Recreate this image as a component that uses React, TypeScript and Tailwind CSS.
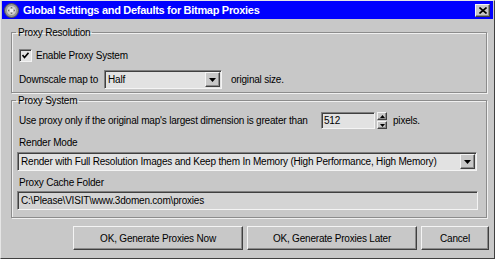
import React from "react";

const font = { fontFamily: '"Liberation Sans", Arial, sans-serif' };
const txt = "text-[10px] tracking-[-0.2px] leading-[13px]";

const Raised = ({ className = "", children }: { className?: string; children?: React.ReactNode }) => (
  <div
    className={`flex items-center justify-center border border-t-[#f4f4f4] border-l-[#f4f4f4] border-r-[#404040] border-b-[#404040] bg-[#c8c8c8] shadow-[inset_-1px_-1px_0_#8a8a8a] ${className}`}
  >
    {children}
  </div>
);

const DownArrow = () => (
  <svg width="7" height="4" viewBox="0 0 7 4">
    <path d="M0 0h7L3.5 4z" fill="#000" />
  </svg>
);

const Dropdown = ({ value, className = "" }: { value: string; className?: string }) => (
  <div
    className={`flex h-[19px] items-center border border-t-[#808080] border-l-[#808080] border-r-[#f4f4f4] border-b-[#f4f4f4] bg-[#e2e2e2] shadow-[inset_1px_1px_0_#404040] ${className}`}
  >
    <span className={`flex-1 truncate pl-[3px] ${txt}`}>{value}</span>
    <Raised className="mr-[1px] h-[15px] w-[15px]">
      <DownArrow />
    </Raised>
  </div>
);

const Group = ({ title, className = "", children }: { title: string; className?: string; children: React.ReactNode }) => (
  <fieldset
    className={`ml-[10px] w-[476px] border border-[#8c8c8c] shadow-[1px_1px_0_#f0f0f0,inset_1px_1px_0_#f0f0f0] ${className}`}
  >
    <legend className={`ml-[4px] px-[2px] ${txt}`}>{title}</legend>
    {children}
  </fieldset>
);

const Button = ({ label, className = "" }: { label: string; className?: string }) => (
  <Raised className={`h-[24px] ${txt} ${className}`}>{label}</Raised>
);

export default function App() {
  return (
    <div
      style={font}
      className="flex h-[259px] w-[495px] flex-col border border-t-[#e6e6e6] border-l-[#e6e6e6] border-r-[#404040] border-b-[#404040] bg-[#c8c8c8] text-black"
    >
      {/* title bar */}
      <div className="mx-[1px] flex h-[18px] items-center bg-[#0000ff] pl-[2px] pr-[3px]">
        <svg width="15" height="15" viewBox="0 0 15 15">
          <circle cx="7.5" cy="7.5" r="7" fill="#9a9a9a" stroke="#505050" />
          <circle cx="7.5" cy="7.5" r="4.5" fill="#d0d0d0" />
          <path d="M4 7.5h7M7.5 4v7" stroke="#707070" strokeWidth="1.5" />
          <circle cx="7.5" cy="7.5" r="2" fill="#f0f0f0" />
        </svg>
        <span className="ml-[4px] flex-1 text-[11px] font-bold tracking-[-0.3px] text-white">
          Global Settings and Defaults for Bitmap Proxies
        </span>
        <Raised className="h-[13px] w-[15px]">
          <svg width="8" height="7" viewBox="0 0 8 7">
            <path d="M0.5 0.5l7 6M7.5 0.5l-7 6" stroke="#000" strokeWidth="1.6" />
          </svg>
        </Raised>
      </div>

      <Group title="Proxy Resolution" className="mt-[7px] h-[67px]">
        <div className="ml-[7px] mt-[10px] flex h-[13px] items-center">
          <div className="flex h-[13px] w-[13px] items-center justify-center border border-t-[#808080] border-l-[#808080] border-r-[#f4f4f4] border-b-[#f4f4f4] bg-[#e2e2e2] shadow-[inset_1px_1px_0_#404040]">
            <svg width="7" height="7" viewBox="0 0 7 7">
              <path d="M0.5 3l2 2.5L6.5 0.8" stroke="#000" strokeWidth="1.6" fill="none" />
            </svg>
          </div>
          <span className={`ml-[4px] ${txt}`}>Enable Proxy System</span>
        </div>
        <div className="ml-[7px] mt-[8px] flex items-center">
          <span className={`w-[85px] ${txt}`}>Downscale map to</span>
          <Dropdown value="Half" className="w-[118px]" />
          <span className={`ml-[9px] ${txt}`}>original size.</span>
        </div>
      </Group>

      <Group title="Proxy System" className="mt-[1px] h-[124px]">
        <div className="ml-[7px] mt-[5px] flex items-center">
          <span className={`w-[302px] ${txt}`}>Use proxy only if the original map&apos;s largest dimension is greater than</span>
          <div className={`flex h-[17px] w-[54px] items-center border border-t-[#808080] border-l-[#808080] border-r-[#f4f4f4] border-b-[#f4f4f4] bg-[#e2e2e2] pl-[2px] shadow-[inset_1px_1px_0_#404040] ${txt}`}>
            512
          </div>
          <div className="ml-[2px] flex h-[17px] w-[10px] flex-col">
            <Raised className="h-[8px] w-[10px]">
              <svg width="5" height="3" viewBox="0 0 5 3">
                <path d="M0 3h5L2.5 0z" fill="#000" />
              </svg>
            </Raised>
            <Raised className="mt-[1px] h-[8px] w-[10px]">
              <svg width="5" height="3" viewBox="0 0 5 3">
                <path d="M0 0h5L2.5 3z" fill="#000" />
              </svg>
            </Raised>
          </div>
          <span className={`ml-[6px] ${txt}`}>pixels.</span>
        </div>
        <div className={`ml-[7px] mt-[7px] ${txt}`}>Render Mode</div>
        <Dropdown
          value="Render with Full Resolution Images and Keep them In Memory (High Performance, High Memory)"
          className="ml-[5px] mt-[3px] w-[460px]"
        />
        <div className={`ml-[7px] mt-[5px] ${txt}`}>Proxy Cache Folder</div>
        <div className={`ml-[5px] mt-[2px] flex h-[19px] w-[461px] items-center border border-t-[#808080] border-l-[#808080] border-r-[#f4f4f4] border-b-[#f4f4f4] bg-[#d4d4d4] pl-[3px] shadow-[inset_1px_1px_0_#404040] ${txt}`}>
          C:\Please\VISIT\www.3domen.com\proxies
        </div>
      </Group>

      <div className="ml-[72px] mt-[8px] flex gap-[4px]">
        <Button label="OK, Generate Proxies Now" className="w-[170px]" />
        <Button label="OK, Generate Proxies Later" className="w-[170px]" />
        <Button label="Cancel" className="w-[68px]" />
      </div>
    </div>
  );
}
